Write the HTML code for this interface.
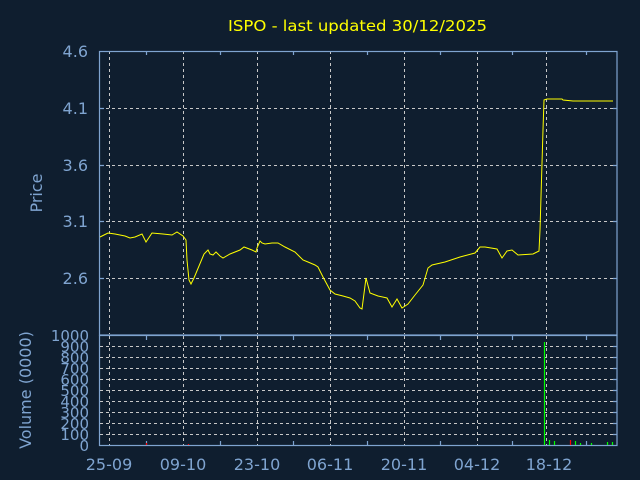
<!DOCTYPE html>
<html><head><meta charset="utf-8"><style>html,body{margin:0;padding:0;background:#0f1e2f;}svg{display:block}</style></head><body>
<svg width="640" height="480" xmlns="http://www.w3.org/2000/svg" font-family="DejaVu Sans, sans-serif">
<rect width="640" height="480" fill="#0f1e2f"/>
<text x="228" y="31" font-size="15" fill="#ffff00" textLength="259" lengthAdjust="spacingAndGlyphs">ISPO - last updated 30/12/2025</text>
<g stroke="#c8c8c8" stroke-width="1" stroke-dasharray="3,3" fill="none">
<path d="M100 108.5H617M100 165.5H617M100 221.5H617M100 278.5H617"/>
<path d="M109.5 51V334M183.5 51V334M257.5 51V334M330.5 51V334M404.5 51V334M477.5 51V334M546.5 51V334"/>
<path d="M100 346.5H617M100 357.5H617M100 368.5H617M100 379.5H617M100 390.5H617M100 401.5H617M100 412.5H617M100 423.5H617M100 434.5H617"/>
<path d="M109.5 336V445M183.5 336V445M257.5 336V445M330.5 336V445M404.5 336V445M477.5 336V445M546.5 336V445"/>
</g>
<g stroke="#7fa4d0" stroke-width="1.2" fill="none">
<rect x="99.5" y="51.5" width="517.5" height="283.5"/>
<rect x="99.5" y="335.5" width="517.5" height="110"/>
<path d="M100 108.5h4M100 165.5h4M100 221.5h4M100 278.5h4M613 108.5h4M613 165.5h4M613 221.5h4M613 278.5h4"/>
<path d="M146.5 336v4M220.5 336v4M293.5 336v4M367.5 336v4M440.5 336v4M512.5 336v4M586.5 336v4"/>
<path d="M146.5 445v-4M220.5 445v-4M293.5 445v-4M367.5 445v-4M440.5 445v-4M512.5 445v-4M586.5 445v-4"/>
<path d="M613 346.5h4M613 357.5h4M613 368.5h4M613 379.5h4M613 390.5h4M613 401.5h4M613 412.5h4M613 423.5h4M613 434.5h4"/>
<path d="M146.5 51v4M220.5 51v4M293.5 51v4M367.5 51v4M440.5 51v4M512.5 51v4M586.5 51v4"/>
</g>
<polyline fill="none" stroke="#ffff00" stroke-width="1" points="100,237 104,235 108,233 115,234 125,236 130,238 135,237 142,234 146,242 152,233 163,234 172,235 177,232 183,236 186,240 187,260 189,280 191,284 194,278 204,254 208,250 210,254 213,255 216,252 220,256 223,258 230,254 240,250 244,247 252,250 256,252 257,248 260,241 262,243 265,244 272,243 278,243 285,247 295,252 300,257 303,260 308,262 315,265 318,267 323,277 330,290 335,294 343,296 350,298 355,301 360,308 362,309 366,278 370,293 378,296 387,298 392,307 397,299 402,308 408,304 415,295 423,285 428,268 432,265 445,262 460,257 475,253 480,247 485,247 497,249 502,258 507,251 512,250 518,255 533,254 539,251 540,230 543,130 544,100 547,99 562,99 563,100 573,101 613,101"/>
<g stroke-width="1.2">
<path d="M544.5 445V342" stroke="#00ff00"/>
<path d="M549.5 445V440M554.5 445V441M575.5 445V441M580.5 445V443M591.5 445V443M607.5 445V442M612.5 445V442" stroke="#00ff00"/>
<path d="M570.5 445V440M146.5 445V443M188.5 445V444" stroke="#ff0000"/>
</g>
<g fill="#7fa4d0" font-size="16" text-anchor="end">
<text x="88" y="57">4.6</text><text x="88" y="114">4.1</text><text x="88" y="171">3.6</text><text x="88" y="227">3.1</text><text x="88" y="284">2.6</text>
</g>
<g fill="#7fa4d0" font-size="15" text-anchor="end">
<text x="89" y="341">1000</text><text x="89" y="352">900</text><text x="89" y="363">800</text><text x="89" y="374">700</text><text x="89" y="385">600</text><text x="89" y="396">500</text><text x="89" y="407">400</text><text x="89" y="418">300</text><text x="89" y="429">200</text><text x="89" y="440">100</text><text x="89" y="451">0</text>
</g>
<g fill="#7fa4d0" font-size="16" text-anchor="middle">
<text x="109" y="470">25-09</text><text x="183" y="470">09-10</text><text x="257" y="470">23-10</text><text x="330" y="470">06-11</text><text x="404" y="470">20-11</text><text x="477" y="470">04-12</text><text x="549" y="470">18-12</text>
</g>
<text transform="translate(42,193) rotate(-90)" fill="#7fa4d0" font-size="16" text-anchor="middle">Price</text>
<text transform="translate(31,390) rotate(-90)" fill="#7fa4d0" font-size="16" text-anchor="middle">Volume (0000)</text>
</svg>
</body></html>
